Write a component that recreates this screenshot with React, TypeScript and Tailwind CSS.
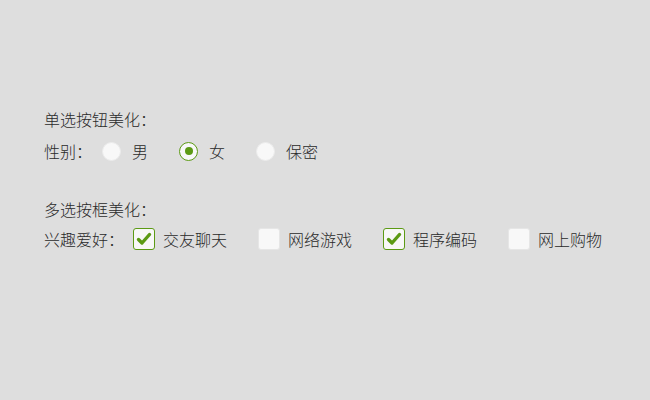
import React, { useState } from 'react';

const font = { fontFamily: '"Noto Sans CJK SC", "Liberation Sans", sans-serif' };

function Radio({ checked }: { checked: boolean }) {
  return (
    <span
      className={
        'flex h-[19px] w-[19px] items-center justify-center rounded-full bg-[#f8f8f8] ' +
        (checked ? 'border border-[#5c9a14]' : 'border border-[#ececec]')
      }
    >
      {checked && <span className="h-[8px] w-[8px] rounded-full bg-[#5c9a14]" />}
    </span>
  );
}

function Check({ checked }: { checked: boolean }) {
  return (
    <span
      className={
        'flex h-[22px] w-[22px] items-center justify-center rounded-[3px] bg-[#f8f8f8] ' +
        (checked ? 'border border-[#5c9a14]' : 'border border-[#e6e6e6]')
      }
    >
      {checked && (
        <svg width="16" height="14" viewBox="0 0 16 14">
          <path d="M2.5 7.5 L6 11 L13.5 2.5" fill="none" stroke="#5c9a14" strokeWidth="3.4" strokeLinecap="round" strokeLinejoin="round" />
        </svg>
      )}
    </span>
  );
}

export default function App() {
  const [sex, setSex] = useState(1);
  const [hobbies, setHobbies] = useState([true, false, true, false]);
  const sexes = ['男', '女', '保密'];
  const hobbyNames = ['交友聊天', '网络游戏', '程序编码', '网上购物'];

  return (
    <div className="h-[400px] w-[650px] bg-[#dedede] pl-[44px] pt-[107px] text-[16px] font-light text-[#2a2a2a]" style={font}>
      <div className="leading-[24px]">单选按钮美化：</div>
      <div className="mt-[8px] flex h-[24px] items-center">
        <span className="w-[58px]">性别：</span>
        {sexes.map((s, i) => (
          <label key={s} className="flex w-[77px] cursor-pointer items-center" onClick={() => setSex(i)}>
            <Radio checked={sex === i} />
            <span className="ml-[11px]">{s}</span>
          </label>
        ))}
      </div>

      <div className="mt-[34px] leading-[24px]">多选按框美化：</div>
      <div className="mt-[6px] flex h-[24px] items-center">
        <span className="w-[89px]">兴趣爱好：</span>
        {hobbyNames.map((h, i) => (
          <label
            key={h}
            className="flex w-[125px] cursor-pointer items-center"
            onClick={() => setHobbies(hobbies.map((v, j) => (j === i ? !v : v)))}
          >
            <Check checked={hobbies[i]} />
            <span className="ml-[8px]">{h}</span>
          </label>
        ))}
      </div>
    </div>
  );
}
